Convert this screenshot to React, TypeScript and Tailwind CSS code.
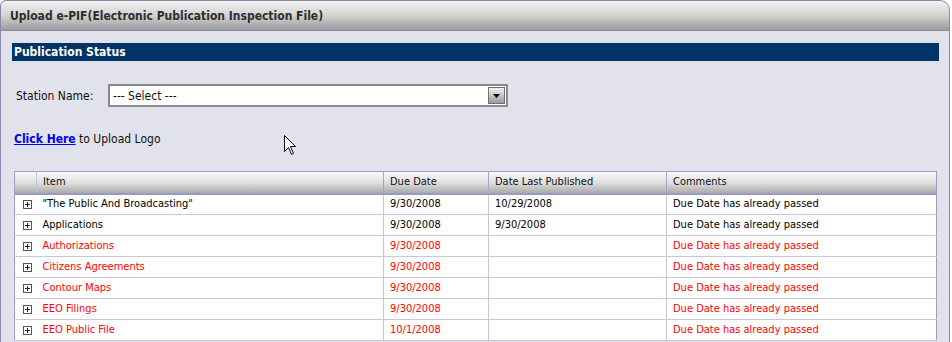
import React from "react";

type Row = { item: string; due: string; last: string; comment: string; red: boolean };

const rows: Row[] = [
  { item: '"The Public And Broadcasting"', due: "9/30/2008", last: "10/29/2008", comment: "Due Date has already passed", red: false },
  { item: "Applications", due: "9/30/2008", last: "9/30/2008", comment: "Due Date has already passed", red: false },
  { item: "Authorizations", due: "9/30/2008", last: "", comment: "Due Date has already passed", red: true },
  { item: "Citizens Agreements", due: "9/30/2008", last: "", comment: "Due Date has already passed", red: true },
  { item: "Contour Maps", due: "9/30/2008", last: "", comment: "Due Date has already passed", red: true },
  { item: "EEO Filings", due: "9/30/2008", last: "", comment: "Due Date has already passed", red: true },
  { item: "EEO Public File", due: "10/1/2008", last: "", comment: "Due Date has already passed", red: true },
];

function PlusBox() {
  return (
    <svg width="9" height="9" viewBox="0 0 9 9" className="block">
      <rect x="0.5" y="0.5" width="8" height="8" fill="#fff" stroke="#555" />
      <path d="M2 4.5H7M4.5 2V7" stroke="#222" strokeWidth="1" />
    </svg>
  );
}

function Cursor() {
  return (
    <svg width="13" height="21" viewBox="0 0 13 21" className="absolute left-[284px] top-[135px]">
      <path
        d="M0.5 0.5V16.5L4.5 12.5L7.5 19.5L9.5 18.5L6.5 11.5H11.5Z"
        fill="#fff"
        stroke="#000"
        strokeWidth="1"
        strokeLinejoin="miter"
      />
    </svg>
  );
}

export default function App() {
  const font = { fontFamily: '"DejaVu Sans Condensed", "DejaVu Sans", Verdana, sans-serif' };
  return (
    <div className="relative w-[952px] h-[342px] overflow-hidden bg-white" style={font}>
      <div className="w-[950px] h-[360px] border border-[#8a88a8] rounded-tl-[6px] rounded-tr-[10px] bg-[#e2e2ec] flex flex-col">
        <div className="h-[30px] border-b border-[#8a88a8] rounded-tl-[6px] rounded-tr-[10px] bg-gradient-to-b from-[#f2f2f2] via-[#d2d2d2] to-[#9c9c9c] flex items-center pl-[9px]">
          <span className="text-[12px] font-bold text-[#2e2e2e]">
            Upload e-PIF(Electronic Publication Inspection File)
          </span>
        </div>

        <div className="mt-[12px] ml-[11px] w-[927px] h-[18px] bg-[#003366] flex items-center pl-[2px]">
          <span className="text-[12px] font-bold text-white">Publication Status</span>
        </div>

        <div className="mt-[23px] ml-[15px] flex items-center h-[23px]">
          <span className="text-[12px] text-[#111] w-[92px]">Station Name:</span>
          <div className="w-[400px] h-[23px] border-2 border-[#8a8a8a] bg-white flex items-center justify-between pl-[3px] pr-[1px]">
            <span className="text-[12px] text-[#111]">--- Select ---</span>
            <div className="w-[17px] h-[17px] border border-[#6f6f6f] bg-gradient-to-b from-[#f2f2f2] to-[#9a9a9a] flex items-center justify-center">
              <svg width="7" height="4" viewBox="0 0 7 4">
                <path d="M0 0H7L3.5 4Z" fill="#000" />
              </svg>
            </div>
          </div>
        </div>

        <div className="mt-[24px] ml-[13px] text-[12px] text-[#111] leading-[16px]">
          <span className="font-bold text-[#0000ee] underline">Click Here</span> to Upload Logo
        </div>

        <div className="mt-[24px] ml-[13px]">
          <table className="border-collapse table-fixed w-[922px] border border-[#a09cc0] bg-white text-[11px]">
            <colgroup>
              <col className="w-[22px]" />
              <col className="w-[347px]" />
              <col className="w-[105px]" />
              <col className="w-[178px]" />
              <col className="w-[270px]" />
            </colgroup>
            <thead>
              <tr className="h-[22px] bg-gradient-to-b from-[#fafafa] via-[#dedede] to-[#a6a6a6]">
                <th className="border-b-2 border-b-[#9c98c4] border-r border-r-[#c4c2d8] p-0" />
                <th className="border-b-2 border-b-[#9c98c4] border-r border-r-[#a8a6c8] text-left font-normal text-[#111] pl-[6px] p-0">Item</th>
                <th className="border-b-2 border-b-[#9c98c4] border-r border-r-[#a8a6c8] text-left font-normal text-[#111] pl-[6px] p-0">Due Date</th>
                <th className="border-b-2 border-b-[#9c98c4] border-r border-r-[#a8a6c8] text-left font-normal text-[#111] pl-[6px] p-0">Date Last Published</th>
                <th className="border-b-2 border-b-[#9c98c4] text-left font-normal text-[#111] pl-[6px] p-0">Comments</th>
              </tr>
            </thead>
            <tbody>
              {rows.map((r, i) => {
                const c = r.red ? "text-[#ff0000]" : "text-[#000]";
                return (
                  <tr key={i} className="h-[21px] border-b border-[#c8c6dc]">
                    <td className="p-0 pl-[8px]">
                      <PlusBox />
                    </td>
                    <td className={`p-0 pl-[6px] border-r border-[#c8c6dc] ${c}`}>{r.item}</td>
                    <td className={`p-0 pl-[6px] border-r border-[#c8c6dc] ${c}`}>{r.due}</td>
                    <td className={`p-0 pl-[6px] border-r border-[#c8c6dc] ${c}`}>{r.last}</td>
                    <td className={`p-0 pl-[6px] ${c}`}>{r.comment}</td>
                  </tr>
                );
              })}
            </tbody>
          </table>
        </div>
      </div>
      <Cursor />
    </div>
  );
}
